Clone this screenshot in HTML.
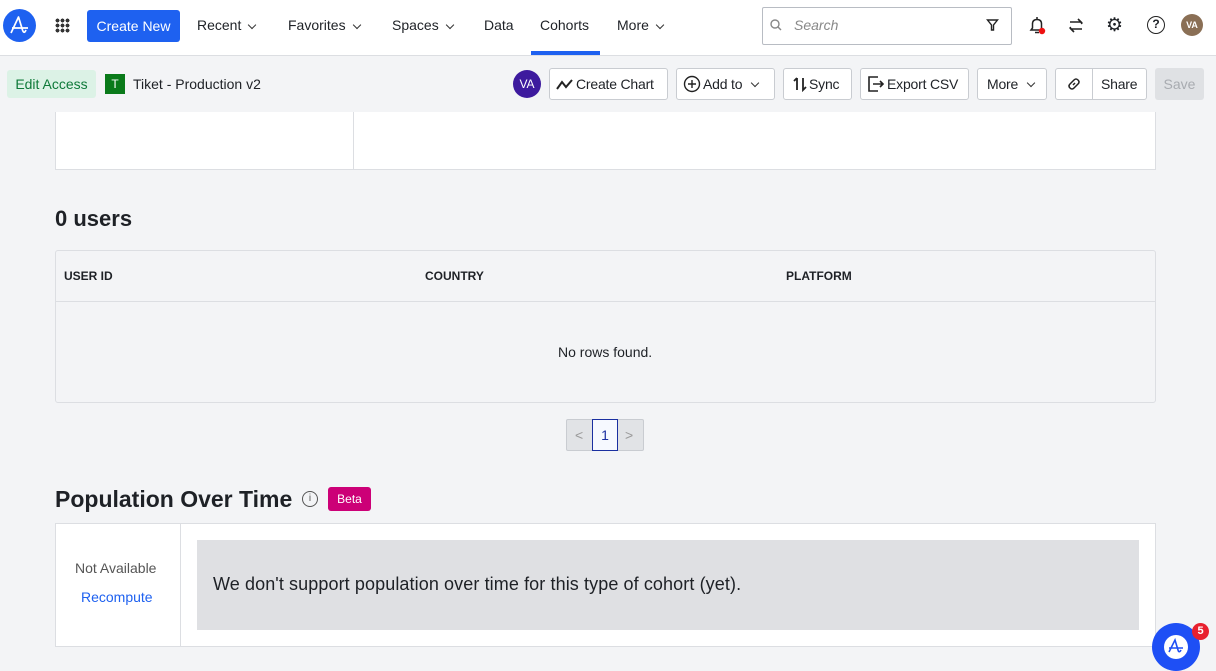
<!DOCTYPE html>
<html><head><meta charset="utf-8"><style>
*{box-sizing:border-box;margin:0;padding:0}
body{width:1216px;height:671px;overflow:hidden;background:#f3f4f6;font-family:"Liberation Sans",sans-serif;color:#1e2126;position:relative}
.a{position:absolute}
.nav{top:0;left:0;width:1216px;height:56px;background:#fff;border-bottom:1px solid #dcdee2}
.ni{position:absolute;top:17px;font-size:14px;color:#1e2126}
.btn{position:absolute;top:68px;height:32px;border:1px solid #c9ccd1;border-radius:3px;background:#fff;font-size:14px;display:flex;align-items:center;padding:0 6px;gap:2px;color:#1e2126;white-space:nowrap;letter-spacing:-0.2px}
.btn svg{flex:none}
.chev{display:inline-block;width:6px;height:6px;border-right:1.5px solid #333;border-bottom:1.5px solid #333;transform:rotate(45deg);margin:0 4px 3px 8px;vertical-align:middle;flex:none}
</style></head><body>
<div class="a nav"></div>
<div class="a" style="left:3px;top:9px;width:33px;height:33px;border-radius:50%;background:#1e61f0"><svg width="33" height="33" viewBox="0 0 33 33"><path d="M8 24 L15.5 8 L19.5 21 Q21 25.5 23 21 M9 19 H25" stroke="#fff" stroke-width="1.7" fill="none" stroke-linejoin="round"/></svg></div>
<div class="a" style="left:55px;top:18px;width:15px;height:15px;background:radial-gradient(circle,#333 1.8px,transparent 2px) 0 0/5px 5px"></div>
<div class="a" style="left:87px;top:10px;width:93px;height:32px;background:#1e61f0;border-radius:3px;color:#fff;font-size:14px;line-height:32px;text-align:center">Create New</div>
<div class="ni" style="left:197px">Recent<span class="chev"></span></div>
<div class="ni" style="left:288px">Favorites<span class="chev"></span></div>
<div class="ni" style="left:392px">Spaces<span class="chev"></span></div>
<div class="ni" style="left:484px">Data</div>
<div class="ni" style="left:540px">Cohorts</div>
<div class="a" style="left:531px;top:51px;width:69px;height:4px;background:#1e61f0"></div>
<div class="ni" style="left:617px">More<span class="chev"></span></div>
<div class="a" style="left:762px;top:7px;width:250px;height:38px;border:1px solid #b8bcc3;border-radius:2px;background:#fff"></div>
<svg class="a" style="left:769px;top:18px" width="14" height="14"><circle cx="6" cy="6" r="4" stroke="#888" stroke-width="1.4" fill="none"/><path d="M9 9 L12 12" stroke="#888" stroke-width="1.4"/></svg>
<div class="a" style="left:794px;top:17px;font-size:14px;font-style:italic;color:#888">Search</div>
<svg class="a" style="left:986px;top:18px" width="13" height="14"><path d="M1.5 2 H11.5 L7.5 7 V12 H5.5 V7 Z" stroke="#222" stroke-width="1.4" fill="none"/></svg>
<svg class="a" style="left:1027px;top:15px" width="20" height="22"><path d="M4 15 H16 L14.5 13 V9 Q14.5 4.5 10 4.5 Q5.5 4.5 5.5 9 V13 Z M8 17.5 H12 M10 2 V4.5" stroke="#222" stroke-width="1.5" fill="none"/><circle cx="15" cy="16" r="3.2" fill="#e11"/></svg>
<svg class="a" style="left:1067px;top:16px" width="18" height="20"><path d="M3 6 H14 L11 3 M15 13 H4 L7 16 M14 6 L15 8 M4 13 L3 11" stroke="#222" stroke-width="1.6" fill="none"/></svg>
<div class="a" style="left:1106px;top:14px;font-size:19px">&#9881;</div>
<div class="a" style="left:1147px;top:16px;width:18px;height:18px;border:1.6px solid #222;border-radius:50%;font-size:12px;font-weight:bold;text-align:center;line-height:15px">?</div>
<div class="a" style="left:1181px;top:14px;width:22px;height:22px;border-radius:50%;background:#8a6f55;color:#fff;font-size:9px;font-weight:bold;text-align:center;line-height:22px">VA</div>

<div class="a" style="left:7px;top:70px;width:89px;height:28px;background:#dcf2e6;border-radius:3px;color:#0f7a3a;font-size:14px;line-height:28px;text-align:center">Edit Access</div>
<div class="a" style="left:105px;top:74px;width:20px;height:20px;background:#0a7a1a;color:#fff;font-size:12px;text-align:center;line-height:20px">T</div>
<div class="a" style="left:133px;top:76px;font-size:14px">Tiket - Production v2</div>
<div class="a" style="left:513px;top:70px;width:28px;height:28px;border-radius:50%;background:#3d1a9e;color:#fff;font-size:12px;text-align:center;line-height:28px">VA</div>
<div class="btn" style="left:549px;width:119px"><svg width="18" height="14"><path d="M1 12 L6 5 L10 10 L16 3" stroke="#222" stroke-width="2" fill="none"/></svg>Create Chart</div>
<div class="btn" style="left:676px;width:99px"><svg width="18" height="18"><circle cx="9" cy="9" r="7.5" stroke="#222" stroke-width="1.4" fill="none"/><path d="M9 5 V13 M5 9 H13" stroke="#222" stroke-width="1.4"/></svg>Add to<span class="chev"></span></div>
<div class="btn" style="left:783px;width:69px;padding-left:9px"><svg width="14" height="16"><path d="M4 2 V14 M1 5 L4 2 M10 2 V14 L13 11" stroke="#222" stroke-width="1.8" fill="none"/></svg>Sync</div>
<div class="btn" style="left:860px;width:109px"><svg width="18" height="18"><path d="M11 2 H2 V16 H11 M6 9 H16 M13 6 L16 9 L13 12" stroke="#222" stroke-width="1.6" fill="none"/></svg>Export CSV</div>
<div class="btn" style="left:977px;width:70px;padding-left:9px">More<span class="chev"></span></div>
<div class="btn" style="left:1055px;width:38px;border-radius:3px 0 0 3px;justify-content:center"><svg width="16" height="16"><path d="M7 9 L9 7 M6 6 L8 4 Q10 2 12 4 Q14 6 12 8 L10 10 M6 6 L4 8 Q2 10 4 12 Q6 14 8 12 L10 10" stroke="#222" stroke-width="1.5" fill="none"/></svg></div>
<div class="btn" style="left:1092px;width:55px;border-radius:0 3px 3px 0;padding-left:8px">Share</div>
<div class="a" style="left:1155px;top:68px;width:49px;height:32px;background:#dfe1e4;border-radius:3px;color:#a8abb0;font-size:14px;line-height:32px;text-align:center">Save</div>

<div class="a" style="left:55px;top:112px;width:1101px;height:58px;background:#fff;border:1px solid #dcdee2;border-top:none"></div>
<div class="a" style="left:353px;top:112px;width:1px;height:57px;background:#dcdee2"></div>
<div class="a" style="left:55px;top:206px;font-size:22px;font-weight:bold">0 users</div>
<div class="a" style="left:55px;top:250px;width:1101px;height:153px;border:1px solid #dcdee2;border-radius:3px"></div>
<div class="a" style="left:56px;top:301px;width:1099px;height:1px;background:#dcdee2"></div>
<div class="a" style="left:64px;top:269px;font-size:12px;font-weight:bold">USER ID</div>
<div class="a" style="left:425px;top:269px;font-size:12px;font-weight:bold">COUNTRY</div>
<div class="a" style="left:786px;top:269px;font-size:12px;font-weight:bold">PLATFORM</div>
<div class="a" style="left:558px;top:344px;font-size:14px">No rows found.</div>
<div class="a" style="left:566px;top:419px;width:78px;height:32px;background:#e1e3e6;border:1px solid #c9ccd1;border-radius:2px"></div>
<div class="a" style="left:575px;top:427px;color:#999;font-size:14px">&lt;</div>
<div class="a" style="left:625px;top:427px;color:#999;font-size:14px">&gt;</div>
<div class="a" style="left:592px;top:419px;width:26px;height:32px;background:#f6f9ff;border:1px solid #1a2fa0;color:#1a2fa0;font-size:14px;text-align:center;line-height:30px">1</div>

<div class="a" style="left:55px;top:486px;font-size:23px;font-weight:bold">Population Over Time</div>
<div class="a" style="left:302px;top:491px;width:16px;height:16px;border:1.4px solid #555;border-radius:50%;font-size:10px;text-align:center;line-height:13px;color:#555">i</div>
<div class="a" style="left:328px;top:487px;width:43px;height:24px;background:#cc0077;border-radius:3px;color:#fff;font-size:12px;text-align:center;line-height:24px">Beta</div>
<div class="a" style="left:55px;top:523px;width:1101px;height:124px;background:#fff;border:1px solid #dcdee2"></div>
<div class="a" style="left:180px;top:524px;width:1px;height:122px;background:#dcdee2"></div>
<div class="a" style="left:75px;top:560px;font-size:14px;color:#555">Not Available</div>
<div class="a" style="left:81px;top:589px;font-size:14px;color:#1e61f0">Recompute</div>
<div class="a" style="left:197px;top:540px;width:942px;height:90px;background:#dfe0e3"></div>
<div class="a" style="left:213px;top:574px;font-size:18px;letter-spacing:0.1px">We don't support population over time for this type of cohort (yet).</div>
<div class="a" style="left:1152px;top:623px;width:48px;height:48px;border-radius:50%;background:#1e4ff5"></div>
<div class="a" style="left:1164px;top:635px;width:24px;height:24px;border-radius:50%;background:#fff"><svg width="24" height="24"><path d="M5 17 L11 5 L14 15 Q15 18.5 17 15 M5 13 H19" stroke="#1e4ff5" stroke-width="1.6" fill="none"/></svg></div>
<div class="a" style="left:1192px;top:623px;width:17px;height:17px;border-radius:50%;background:#e8202e;color:#fff;font-size:11px;font-weight:bold;text-align:center;line-height:17px">5</div>
</body></html>
